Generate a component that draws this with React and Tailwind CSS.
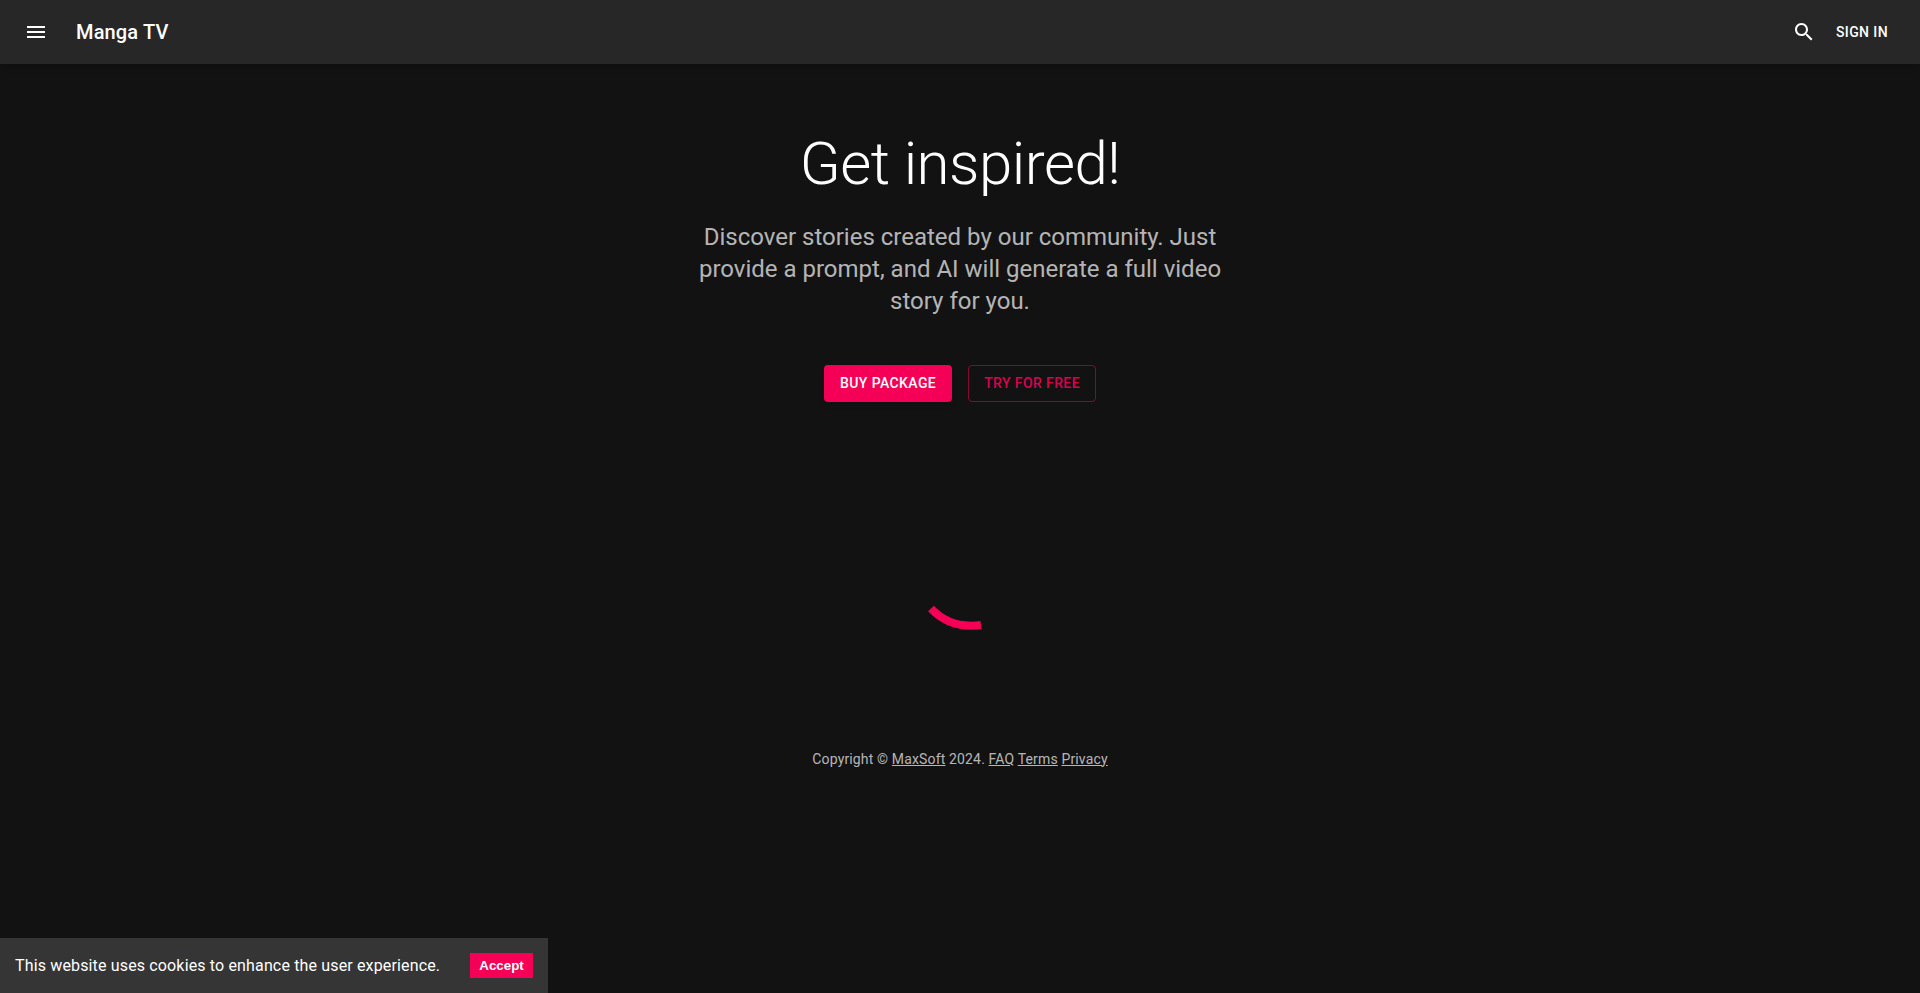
const MenuIcon = () => (
  <svg viewBox="0 0 24 24" className="h-6 w-6 fill-white">
    <path d="M3 18h18v-2H3v2zm0-5h18v-2H3v2zm0-7v2h18V6H3z" />
  </svg>
);

const SearchIcon = () => (
  <svg viewBox="0 0 24 24" className="h-6 w-6 fill-white">
    <path d="M15.5 14h-.79l-.28-.27C15.41 12.59 16 11.11 16 9.5 16 5.91 13.09 3 9.5 3S3 5.91 3 9.5 5.91 16 9.5 16c1.61 0 3.09-.59 4.23-1.57l.27.28v.79l5 4.99L20.49 19l-4.99-5zm-6 0C7.01 14 5 11.99 5 9.5S7.01 5 9.5 5 14 7.01 14 9.5 11.99 14 9.5 14z" />
  </svg>
);

const App = () => {
  return (
    <div className="relative flex min-h-[993px] flex-col bg-[#121212] font-['Roboto',sans-serif] text-white">
      <header className="flex h-16 items-center justify-between bg-[#272727] pl-6 pr-6 shadow-md">
        <div className="flex items-center">
          <MenuIcon />
          <h1 className="ml-[28px] text-xl font-medium tracking-[0.15px]">Manga TV</h1>
        </div>
        <div className="flex items-center">
          <SearchIcon />
          <button className="ml-[12px] px-2 py-1.5 text-sm font-medium tracking-[0.4px]">SIGN IN</button>
        </div>
      </header>

      <main className="flex flex-col items-center">
        <h2 className="mt-[64px] text-[60px] leading-[72px] font-light tracking-[-0.5px]">Get inspired!</h2>
        <p className="mt-[21px] w-[552px] text-center text-2xl leading-8 text-white/70">
          Discover stories created by our community. Just provide a prompt, and AI will generate a full video story for you.
        </p>
        <div className="mt-[48px] flex gap-4">
          <button className="rounded bg-[#f50057] px-4 py-[6px] text-sm leading-[24.5px] font-medium tracking-[0.4px] shadow-md">
            BUY PACKAGE
          </button>
          <button className="rounded border border-[#f50057]/50 px-[15px] py-[5px] text-sm leading-[24.5px] font-medium tracking-[0.4px] text-[#f50057]/90">
            TRY FOR FREE
          </button>
        </div>

        <div className="mt-[198px] h-10 w-20">
          <svg viewBox="0 0 80 40" className="h-full w-full">
            <path d="M11 8.5 Q 30 29 61 25" fill="none" stroke="#f50057" strokeWidth="8" />
          </svg>
        </div>

        <p className="mt-[109px] text-sm leading-5 tracking-[0.15px] text-white/70">
          Copyright © <a className="underline" href="#">MaxSoft</a> 2024. <a className="underline" href="#">FAQ</a>{" "}
          <a className="underline" href="#">Terms</a> <a className="underline" href="#">Privacy</a>
        </p>
      </main>

      <div className="absolute bottom-0 left-0 flex h-[55px] w-[548px] items-center justify-between bg-[#353535] px-[15px]">
        <span className="text-base tracking-[0.15px]">This website uses cookies to enhance the user experience.</span>
        <button className="h-[25px] w-[63px] bg-[#f50057] font-['Liberation_Sans',sans-serif] text-[13.33px] font-bold">
          Accept
        </button>
      </div>
    </div>
  );
};

export default App;
